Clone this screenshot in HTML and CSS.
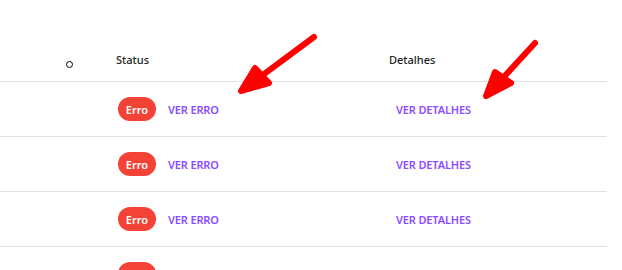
FILE: index.html
```html
<!DOCTYPE html>
<html lang="pt">
<head>
<meta charset="utf-8">
<link rel="stylesheet" href="styles.css">
</head>
<body>
<div class="table">
  <div class="row head">
    <div class="cell c1"><span class="sort"></span></div>
    <div class="cell c2">Status</div>
    <div class="cell c3">Detalhes</div>
  </div>
  <div class="row">
    <div class="cell c1"></div>
    <div class="cell c2"><span class="pill">Erro</span><a class="link">VER ERRO</a></div>
    <div class="cell c3"><a class="link">VER DETALHES</a></div>
  </div>
  <div class="row">
    <div class="cell c1"></div>
    <div class="cell c2"><span class="pill">Erro</span><a class="link">VER ERRO</a></div>
    <div class="cell c3"><a class="link">VER DETALHES</a></div>
  </div>
  <div class="row">
    <div class="cell c1"></div>
    <div class="cell c2"><span class="pill">Erro</span><a class="link">VER ERRO</a></div>
    <div class="cell c3"><a class="link">VER DETALHES</a></div>
  </div>
  <div class="row">
    <div class="cell c1"></div>
    <div class="cell c2"><span class="pill">Erro</span><a class="link">VER ERRO</a></div>
    <div class="cell c3"><a class="link">VER DETALHES</a></div>
  </div>
</div>
<svg class="arrows" width="622" height="270" viewBox="0 0 622 270">
  <g stroke="#f00" stroke-width="6" stroke-linecap="round" stroke-linejoin="round" fill="#f00">
    <line x1="314" y1="37" x2="248" y2="86"/>
    <polygon points="241,91 255,68 269,83"/>
    <line x1="535" y1="43" x2="491" y2="91"/>
    <polygon points="486,96 495,72 511,83"/>
  </g>
</svg>
</body>
</html>
```
FILE: styles.css
```css
html, body {
  margin: 0;
  padding: 0;
  background: #fff;
  font-family: "Noto Sans", "DejaVu Sans", sans-serif;
}
.table {
  width: 607px;
}
.row {
  display: grid;
  grid-template-columns: 116px 273px 1fr;
  height: 54px;
  border-bottom: 1px solid #e0e0e0;
  align-items: center;
}
.row.head {
  height: 81px;
  align-items: end;
}
.head .cell {
  font-size: 11px;
  font-weight: 500;
  color: #222;
  padding-bottom: 15px;
  line-height: 12px;
}
.c2, .c3 {
  display: flex;
  align-items: center;
}
.head .c1 {
  padding-left: 66px;
  padding-bottom: 13px;
}
.sort {
  display: block;
  width: 5px;
  height: 5px;
  border: 1px solid #000;
  border-radius: 50%;
}
.pill {
  display: inline-flex;
  align-items: center;
  justify-content: center;
  width: 38px;
  height: 24px;
  margin-left: 2px;
  margin-right: 12px;
  border-radius: 12px;
  background: #f44336;
  color: #fff;
  font-size: 11px;
  font-weight: 600;
}
.link {
  color: #8a4dff;
  font-size: 11px;
  font-weight: 600;
  letter-spacing: -0.15px;
}
.c3 .link {
  margin-left: 7px;
}
.arrows {
  position: absolute;
  left: 0;
  top: 0;
  pointer-events: none;
}
```
